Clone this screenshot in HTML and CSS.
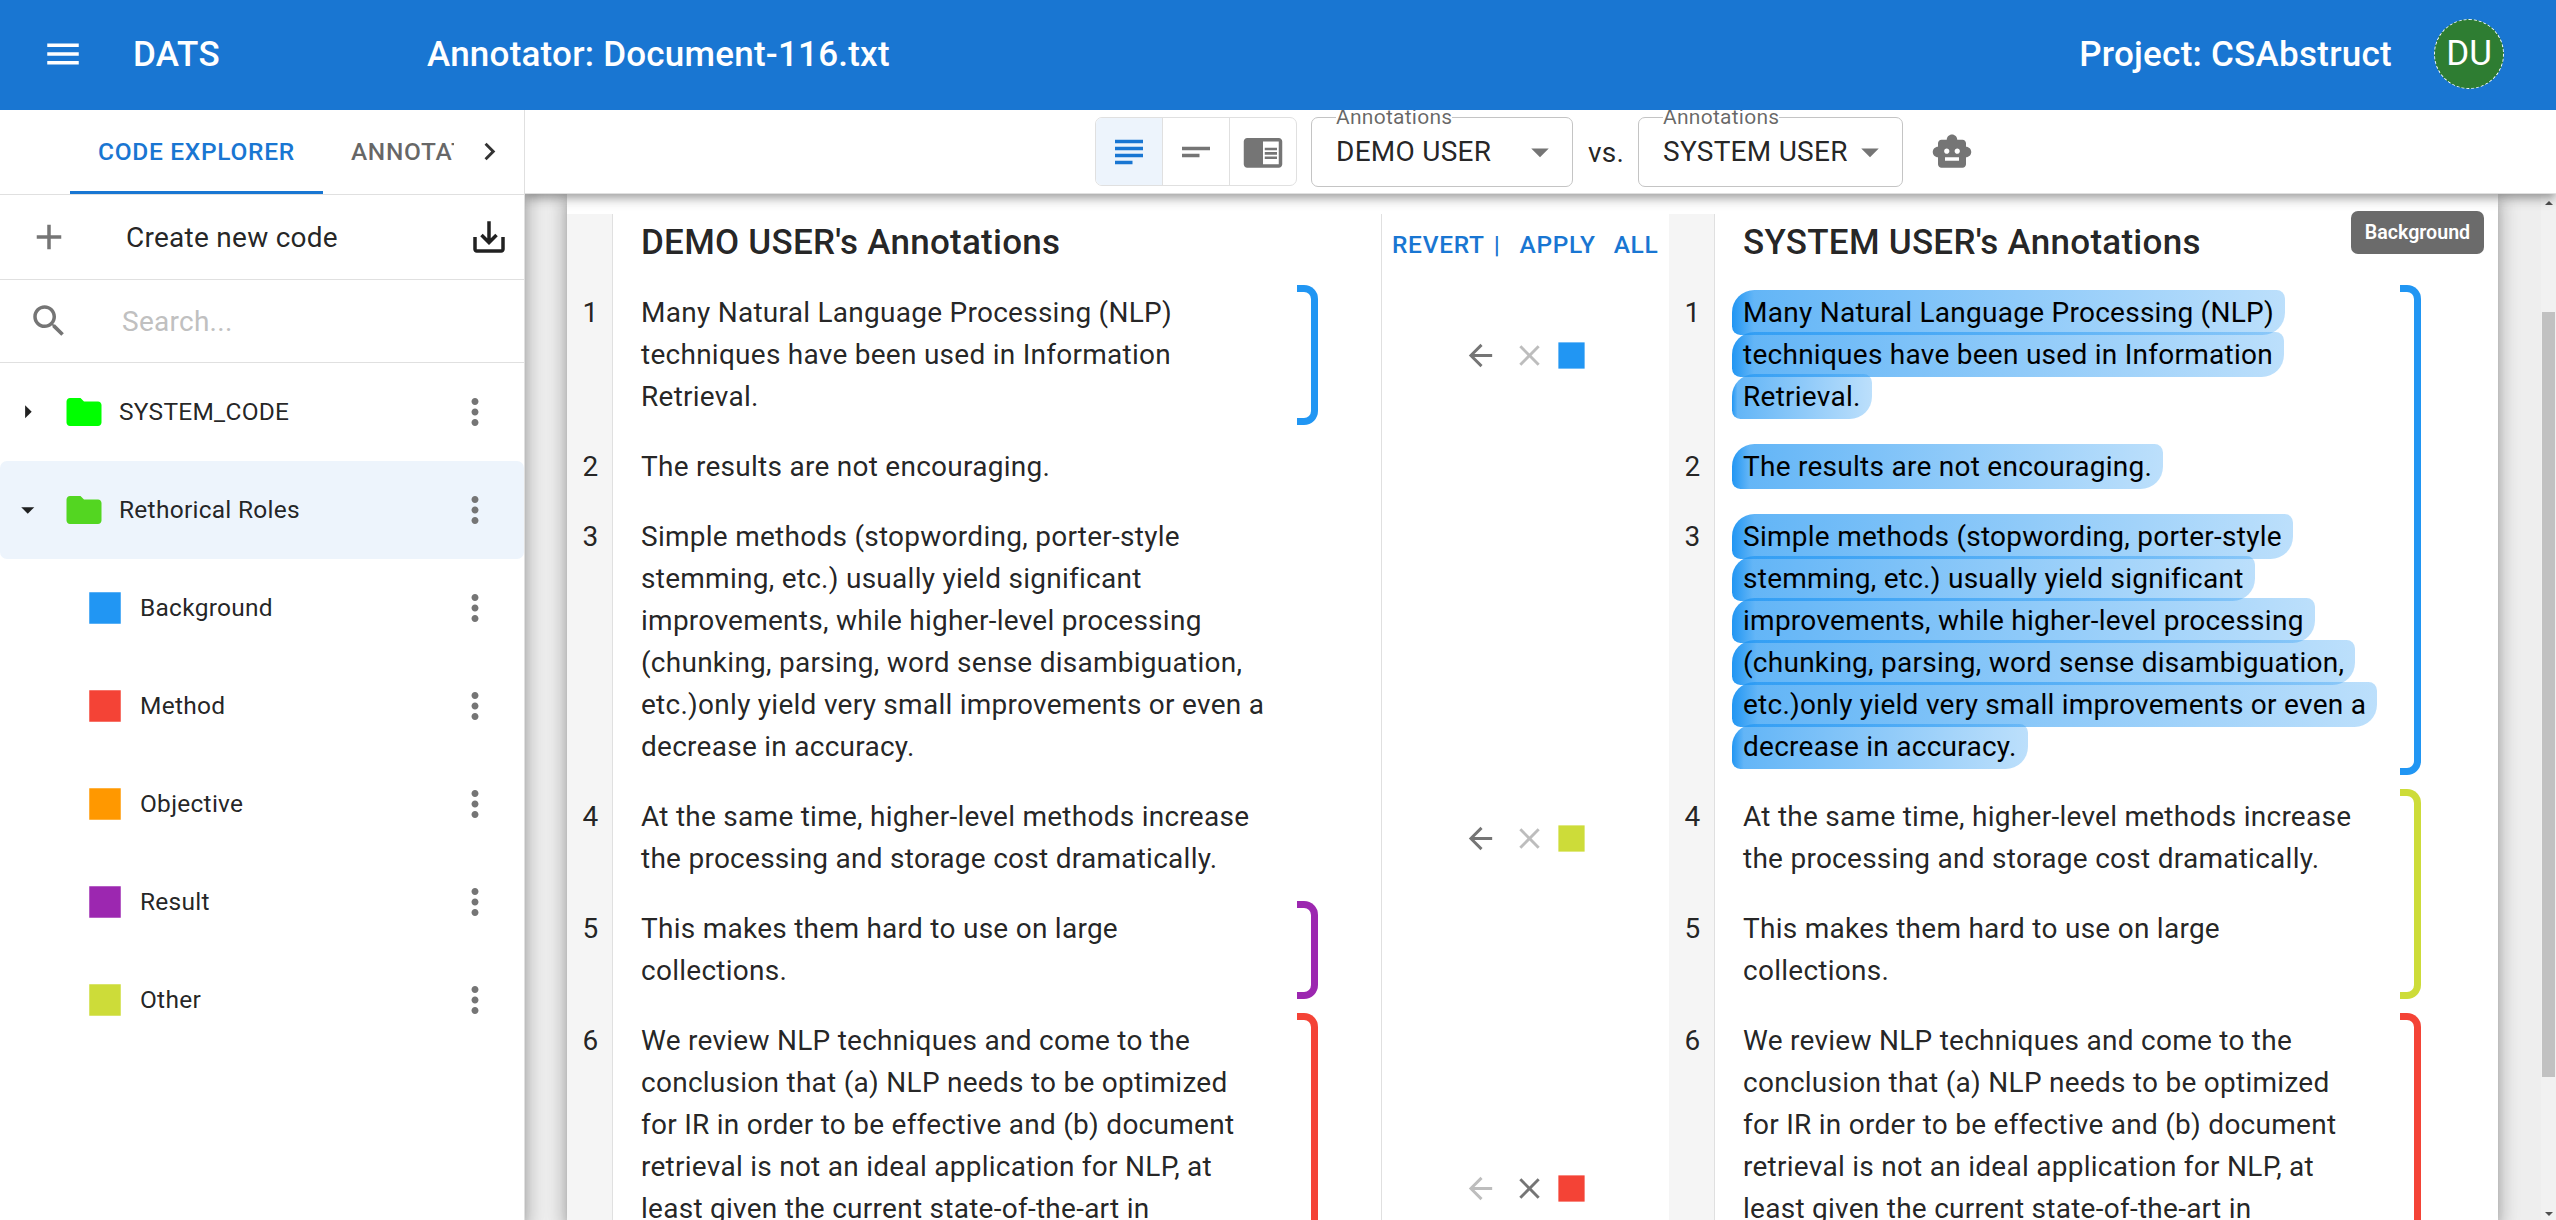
FILE: index.html
```html
<!DOCTYPE html>
<html lang="en">
<head>
<meta charset="utf-8">
<title>DATS - Annotator</title>
<link rel="stylesheet" href="styles.css">
</head>
<body>
<svg class="defs" width="0" height="0" aria-hidden="true">
  <symbol id="i-menu" viewBox="0 0 24 24"><path d="M3 18h18v-2H3zm0-5h18v-2H3zm0-7v2h18V6z"/></symbol>
  <symbol id="i-right" viewBox="0 0 24 24"><path d="M10 6 8.59 7.41 13.17 12l-4.58 4.59L10 18l6-6z"/></symbol>
  <symbol id="i-add" viewBox="0 0 24 24"><path d="M19 13h-6v6h-2v-6H5v-2h6V5h2v6h6z"/></symbol>
  <symbol id="i-download" viewBox="0 0 24 24"><path d="M19 12v7H5v-7H3v7c0 1.100.9 2 2 2h14c1.100 0 2-.9 2-2v-7zm-6 .67 2.590-2.580L17 11.500l-5 5-5-5 1.410-1.410L11 12.670V3h2z"/></symbol>
  <symbol id="i-search" viewBox="0 0 24 24"><path d="M15.500 14h-.79l-.28-.27C15.410 12.590 16 11.110 16 9.500 16 5.910 13.090 3 9.500 3S3 5.910 3 9.500 5.910 16 9.500 16c1.610 0 3.090-.59 4.230-1.570l.27.28v.79l5 4.990L20.490 19zm-6 0C7.010 14 5 11.990 5 9.500S7.010 5 9.500 5 14 7.010 14 9.500 11.990 14 9.500 14"/></symbol>
  <symbol id="i-caret-right" viewBox="0 0 24 24"><path d="m10 17 5-5-5-5z"/></symbol>
  <symbol id="i-caret-down" viewBox="0 0 24 24"><path d="m7 10 5 5 5-5z"/></symbol>
  <symbol id="i-folder" viewBox="0 0 24 24"><path d="M10 4H4c-1.100 0-1.990.9-1.990 2L2 18c0 1.100.9 2 2 2h16c1.100 0 2-.9 2-2V8c0-1.100-.9-2-2-2h-8z"/></symbol>
  <symbol id="i-square" viewBox="0 0 24 24"><path d="M3 3h18v18H3z"/></symbol>
  <symbol id="i-more" viewBox="0 0 24 24"><path d="M12 8c1.100 0 2-.9 2-2s-.9-2-2-2-2 .9-2 2 .9 2 2 2m0 2c-1.100 0-2 .9-2 2s.9 2 2 2 2-.9 2-2-.9-2-2-2m0 6c-1.100 0-2 .9-2 2s.9 2 2 2 2-.9 2-2-.9-2-2-2"/></symbol>
  <symbol id="i-subject" viewBox="0 0 24 24"><path d="M14 17H4v2h10zm6-8H4v2h16zM4 15h16v-2H4zM4 5v2h16V5z"/></symbol>
  <symbol id="i-short" viewBox="0 0 24 24"><path d="M4 9h16v2H4zm0 4h10v2H4z"/></symbol>
  <symbol id="i-reader" viewBox="0 0 24 24"><path d="M13 12h7v1.500h-7zm0-2.500h7V11h-7zm0 5h7V16h-7zM21 4H3c-1.100 0-2 .9-2 2v13c0 1.100.9 2 2 2h18c1.100 0 2-.9 2-2V6c0-1.100-.9-2-2-2m0 15h-9V6h9z"/></symbol>
  <symbol id="i-robot" viewBox="0 0 24 24"><path d="M20 9V7c0-1.100-.9-2-2-2h-3c0-1.660-1.340-3-3-3S9 3.340 9 5H6c-1.100 0-2 .9-2 2v2c-1.660 0-3 1.340-3 3s1.340 3 3 3v4c0 1.100.9 2 2 2h12c1.100 0 2-.9 2-2v-4c1.660 0 3-1.340 3-3s-1.340-3-3-3M7.500 11.500c0-.83.67-1.500 1.500-1.500s1.500.67 1.500 1.500S9.830 13 9 13s-1.500-.67-1.500-1.500M16 17H8v-2h8zm-1-4c-.83 0-1.500-.67-1.500-1.500S14.170 10 15 10s1.500.67 1.500 1.500S15.830 13 15 13"/></symbol>
  <symbol id="i-back" viewBox="0 0 24 24"><path d="M20 11H7.830l5.590-5.590L12 4l-8 8 8 8 1.410-1.410L7.830 13H20z"/></symbol>
  <symbol id="i-close" viewBox="0 0 24 24"><path d="M19 6.410 17.590 5 12 10.590 6.410 5 5 6.410 10.590 12 5 17.590 6.410 19 12 13.410 17.590 19 19 17.590 13.410 12z"/></symbol>
</svg>

<header class="appbar">
  <svg class="icon"><use href="#i-menu"/></svg>
  <div class="brand">DATS</div>
  <div class="page-title">Annotator: Document-116.txt</div>
  <div class="project">Project: CSAbstruct</div>
  <div class="avatar">DU</div>
</header>

<div class="workspace">
  <aside class="sidebar">
    <nav class="tabs">
      <div class="tab-strip">
        <div class="tab active">CODE EXPLORER</div>
        <div class="tab">ANNOTATIONS</div>
      </div>
      <svg class="icon small tab-scroll"><use href="#i-right"/></svg>
    </nav>
    <div class="create-row">
      <svg class="icon muted"><use href="#i-add"/></svg>
      <span class="create-label">Create new code</span>
      <svg class="icon"><use href="#i-download"/></svg>
    </div>
    <div class="search-row">
      <svg class="icon muted"><use href="#i-search"/></svg>
      <span class="search-label">Search...</span>
    </div>
    <ul class="tree">
      <li class="node"><svg class="icon caret"><use href="#i-caret-right"/></svg><svg class="icon system"><use href="#i-folder"/></svg><span class="node-label">SYSTEM_CODE</span><svg class="icon muted"><use href="#i-more"/></svg></li>
      <li class="node selected"><svg class="icon caret"><use href="#i-caret-down"/></svg><svg class="icon roles"><use href="#i-folder"/></svg><span class="node-label">Rethorical Roles</span><svg class="icon muted"><use href="#i-more"/></svg></li>
      <li class="node child"><svg class="icon background"><use href="#i-square"/></svg><span class="node-label">Background</span><svg class="icon muted"><use href="#i-more"/></svg></li>
      <li class="node child"><svg class="icon method"><use href="#i-square"/></svg><span class="node-label">Method</span><svg class="icon muted"><use href="#i-more"/></svg></li>
      <li class="node child"><svg class="icon objective"><use href="#i-square"/></svg><span class="node-label">Objective</span><svg class="icon muted"><use href="#i-more"/></svg></li>
      <li class="node child"><svg class="icon result"><use href="#i-square"/></svg><span class="node-label">Result</span><svg class="icon muted"><use href="#i-more"/></svg></li>
      <li class="node child"><svg class="icon other"><use href="#i-square"/></svg><span class="node-label">Other</span><svg class="icon muted"><use href="#i-more"/></svg></li>
    </ul>
  </aside>

  <main class="content">
    <div class="toolbar">
      <div class="toggles">
        <div class="toggle on"><svg class="icon"><use href="#i-subject"/></svg></div>
        <div class="toggle"><svg class="icon"><use href="#i-short"/></svg></div>
        <div class="toggle"><svg class="icon"><use href="#i-reader"/></svg></div>
      </div>
      <div class="select first"><span class="select-label">Annotations</span><span class="select-value">DEMO USER</span><svg class="icon muted"><use href="#i-caret-down"/></svg></div>
      <span class="versus">vs.</span>
      <div class="select second"><span class="select-label">Annotations</span><span class="select-value">SYSTEM USER</span><svg class="icon muted"><use href="#i-caret-down"/></svg></div>
      <svg class="icon muted robot"><use href="#i-robot"/></svg>
    </div>

    <div class="scroller">
      <div class="paper">
        <section class="column">
          <div class="heading"><div class="gutter"></div><h2>DEMO USER's Annotations</h2></div>
          <div class="group">
            <div class="sentences">
              <div class="sentence"><div class="gutter">1</div><p>Many Natural Language Processing (NLP)<br>techniques have been used in Information<br>Retrieval.</p></div>
            </div>
            <div class="bracket background"></div>
          </div>
          <div class="group">
            <div class="sentences">
              <div class="sentence"><div class="gutter">2</div><p>The results are not encouraging.</p></div>
              <div class="sentence"><div class="gutter">3</div><p>Simple methods (stopwording, porter-style<br>stemming, etc.) usually yield significant<br>improvements, while higher-level processing<br>(chunking, parsing, word sense disambiguation,<br>etc.)only yield very small improvements or even a<br>decrease in accuracy.</p></div>
              <div class="sentence"><div class="gutter">4</div><p>At the same time, higher-level methods increase<br>the processing and storage cost dramatically.</p></div>
            </div>
          </div>
          <div class="group">
            <div class="sentences">
              <div class="sentence"><div class="gutter">5</div><p>This makes them hard to use on large<br>collections.</p></div>
            </div>
            <div class="bracket result"></div>
          </div>
          <div class="group last">
            <div class="sentences">
              <div class="sentence"><div class="gutter">6</div><p>We review NLP techniques and come to the<br>conclusion that (a) NLP needs to be optimized<br>for IR in order to be effective and (b) document<br>retrieval is not an ideal application for NLP, at<br>least given the current state-of-the-art in</p></div>
            </div>
            <div class="bracket method"></div>
          </div>
        </section>

        <section class="compare">
          <div class="actions"><span>REVERT</span><span class="bar">|</span><span class="apply">APPLY</span><span>ALL</span></div>
          <div class="decision span-first"><svg class="icon small muted"><use href="#i-back"/></svg><svg class="icon small disabled"><use href="#i-close"/></svg><svg class="icon small background"><use href="#i-square"/></svg></div>
          <div class="decision span-fourth"><svg class="icon small muted"><use href="#i-back"/></svg><svg class="icon small disabled"><use href="#i-close"/></svg><svg class="icon small other"><use href="#i-square"/></svg></div>
          <div class="decision span-sixth"><svg class="icon small disabled"><use href="#i-back"/></svg><svg class="icon small muted"><use href="#i-close"/></svg><svg class="icon small method"><use href="#i-square"/></svg></div>
        </section>

        <section class="column">
          <div class="heading"><div class="gutter"></div><h2>SYSTEM USER's Annotations</h2></div>
          <div class="group">
            <div class="sentences">
              <div class="sentence"><div class="gutter">1</div><p><mark>Many Natural Language Processing (NLP)<br>techniques have been used in Information<br>Retrieval.</mark></p></div>
              <div class="sentence"><div class="gutter">2</div><p><mark>The results are not encouraging.</mark></p></div>
              <div class="sentence"><div class="gutter">3</div><p><mark>Simple methods (stopwording, porter-style<br>stemming, etc.) usually yield significant<br>improvements, while higher-level processing<br>(chunking, parsing, word sense disambiguation,<br>etc.)only yield very small improvements or even a<br>decrease in accuracy.</mark></p></div>
            </div>
            <div class="bracket background"></div>
          </div>
          <div class="group">
            <div class="sentences">
              <div class="sentence"><div class="gutter">4</div><p>At the same time, higher-level methods increase<br>the processing and storage cost dramatically.</p></div>
              <div class="sentence"><div class="gutter">5</div><p>This makes them hard to use on large<br>collections.</p></div>
            </div>
            <div class="bracket other"></div>
          </div>
          <div class="group last">
            <div class="sentences">
              <div class="sentence"><div class="gutter">6</div><p>We review NLP techniques and come to the<br>conclusion that (a) NLP needs to be optimized<br>for IR in order to be effective and (b) document<br>retrieval is not an ideal application for NLP, at<br>least given the current state-of-the-art in</p></div>
            </div>
            <div class="bracket method"></div>
          </div>
        </section>
        <div class="tooltip">Background</div>
      </div>
      <div class="scrollbar"><i class="arrow up"></i><i class="thumb"></i><i class="arrow down"></i></div>
    </div>
  </main>
</div>
</body>
</html>
```
FILE: styles.css
```css
* { box-sizing: border-box; }

body {
  margin: 0;
  height: 1220px;
  overflow: hidden;
  display: flex;
  flex-direction: column;
  font-family: Roboto, "Liberation Sans", sans-serif;
  font-size: 28px;
  line-height: 42px;
  letter-spacing: 0.00938em;
  color: rgba(0, 0, 0, 0.87);
  background: #fff;
}

.defs { display: none; }
.icon { width: 42px; height: 42px; flex: none; fill: currentColor; }
.icon.small { width: 35px; height: 35px; }
.muted { color: #757575; }
.disabled { color: #bdbdbd; }
.system { color: #00ff00; }
.roles { color: #53d621; }
.background { color: #2196f3; }
.method { color: #f44336; }
.objective { color: #ff9800; }
.result { color: #9c27b0; }
.other { color: #cddc39; }

/* App bar */
.appbar {
  height: 110px;
  flex: none;
  display: flex;
  align-items: center;
  padding: 0 52px 2px 42px;
  background: #1976d2;
  color: #fff;
  font-size: 35px;
  font-weight: 500;
  letter-spacing: 0.0075em;
  position: relative;
  z-index: 3;
}
.brand { margin-left: 49px; width: 294px; padding-top: 2px; }
.page-title { padding-top: 2px; letter-spacing: 0.0065em; }
.project { margin-left: auto; padding-top: 2px; }
.avatar {
  width: 70px;
  height: 70px;
  margin-left: 42px;
  border: 1px dashed #fff;
  border-radius: 50%;
  background: #2e7d32;
  display: flex;
  align-items: center;
  justify-content: center;
  font-weight: 400;
  letter-spacing: 0;
}

.workspace { flex: 1; min-height: 0; display: flex; }

/* Sidebar */
.sidebar {
  width: 525px;
  flex: none;
  border-right: 1px solid #e0e0e0;
  background: #fff;
  box-shadow: 0 5px 9px -2px rgba(0, 0, 0, 0.2), 0 9px 17px 2px rgba(0, 0, 0, 0.14), 0 3px 20px 4px rgba(0, 0, 0, 0.12);
  position: relative;
  z-index: 1;
}
.tabs { height: 85px; display: flex; border-bottom: 1px solid #e0e0e0; }
.tab-strip { width: 384px; margin-left: 70px; flex: none; display: flex; overflow: hidden; }
.tab {
  height: 84px;
  padding: 0 28px;
  flex: none;
  line-height: 84px;
  font-size: 24.5px;
  font-weight: 500;
  letter-spacing: 0.02857em;
  color: rgba(0, 0, 0, 0.6);
}
.tab.active { color: #1976d2; border-bottom: 3.5px solid #1976d2; }
.tab-scroll { margin: 24px 0 0 18px; color: rgba(0, 0, 0, 0.8); }
.create-row { height: 85px; display: flex; align-items: center; padding: 0 14px 0 28px; border-bottom: 1px solid #e0e0e0; }
.create-label { margin-left: 56px; flex: 1; padding-top: 1px; }
.search-row { height: 83px; display: flex; align-items: center; padding-left: 28px; border-bottom: 1px solid #e0e0e0; }
.search-label { margin-left: 52px; padding-top: 1px; color: #c0c0c0; }
.tree { list-style: none; margin: 0; padding: 0; }
.node { height: 98px; display: flex; align-items: center; padding: 0 28px 0 12px; border-radius: 7px; }
.node.selected { background: #edf4fc; }
.node .caret { width: 31.5px; height: 31.5px; margin-right: 19.5px; }
.node.child { padding-left: 84px; }
.node-label { flex: 1; margin-left: 14px; font-size: 24.5px; letter-spacing: 0.01071em; }

/* Toolbar */
.content { flex: 1; min-width: 0; display: flex; flex-direction: column; }
.toolbar {
  height: 84px;
  flex: none;
  display: flex;
  align-items: flex-start;
  padding: 7px 0 0 570px;
  background: #fff;
  border-bottom: 1px solid #e0e0e0;
  box-shadow: 0 3.5px 7px -1.75px rgba(0, 0, 0, 0.2), 0 7px 8.75px rgba(0, 0, 0, 0.14), 0 1.75px 17.5px rgba(0, 0, 0, 0.12);
  clip-path: inset(0 0 -40px 0);
  position: relative;
  z-index: 2;
}
.toggles { display: flex; height: 69px; width: 202px; border: 1px solid #e0e0e0; border-radius: 7px; overflow: hidden; color: #757575; }
.toggle { flex: 1; display: flex; align-items: center; justify-content: center; }
.toggle + .toggle { border-left: 1px solid #e0e0e0; }
.toggle.on { background: #edf4fc; color: #1976d2; }
.select { height: 70px; border: 1px solid #c4c4c4; border-radius: 7px; display: flex; align-items: center; padding-left: 24px; position: relative; }
.select.first { width: 262px; margin-left: 14px; }
.select.second { width: 265px; }
.select-value { flex: 1; white-space: nowrap; }
.select .icon { margin-right: 11px; flex: none; }
.select-label { position: absolute; left: 24px; top: -20px; font-size: 21px; line-height: 38px; color: rgba(0, 0, 0, 0.6); background: #fff; }
.versus { width: 65px; padding: 15px 0 0 15px; }
.robot { margin: 14px 0 0 28px; }

/* Document area */
.scroller { flex: 1; min-height: 0; display: flex; overflow: hidden; background: #eee; justify-content: space-between; }
.paper {
  width: 1931px;
  margin-left: 42px;
  padding: 20px 14px 0 0;
  display: grid;
  grid-template-columns: 814px 288px 815px;
  background: #fff;
  box-shadow: 0 5px 9px -2px rgba(0, 0, 0, 0.2), 0 9px 17px 2px rgba(0, 0, 0, 0.14), 0 3px 20px 4px rgba(0, 0, 0, 0.12);
  position: relative;
}
.gutter { width: 46px; flex: none; background: #f5f5f5; border-right: 1px solid #e0e0e0; text-align: center; padding: 14px 0 0 2px; }
.heading { height: 64px; display: flex; }
h2 { margin: 0; padding: 1px 0 0 28px; font-size: 35px; line-height: 56px; font-weight: 500; letter-spacing: 0.0075em; }
.group { display: flex; justify-content: space-between; }
.group.last .sentence { height: 364px; }
.sentence { display: flex; }
p { margin: 0; padding: 14px 0 14px 28px; white-space: nowrap; }
mark {
  margin: 0 -0.4em;
  padding: 0.2em 0.4em;
  border-radius: 0.8em 0.3em;
  color: #000;
  background: linear-gradient(to right, rgb(33, 150, 243), rgba(33, 150, 243, 0.7) 4%, rgba(33, 150, 243, 0.3));
  -webkit-box-decoration-break: clone;
  box-decoration-break: clone;
}
.bracket { width: 21px; margin: 7px 63px 7px 0; border: 7px solid currentColor; border-left: 0; border-radius: 0 14px 14px 0; }

.compare { border-left: 1px solid #e0e0e0; }
.actions { height: 64px; display: flex; padding: 10px 0 0 10px; font-size: 24.5px; font-weight: 500; letter-spacing: 0.02857em; color: #1976d2; }
.actions .bar { margin-left: 9px; }
.actions .apply { margin: 0 18px 0 19px; }
.decision { display: flex; align-items: center; padding-left: 81px; gap: 14px; }
.decision .icon:last-child { margin-left: -7px; }
.span-first { height: 154px; }
.span-fourth { height: 112px; margin-top: 350px; }
.span-sixth { height: 364px; margin-top: 112px; }

.tooltip {
  position: absolute;
  top: 17px;
  right: 14px;
  width: 133px;
  padding: 7px 0;
  border-radius: 7px;
  background: #6b6b6b;
  color: #fff;
  font-size: 19.6px;
  line-height: 29px;
  font-weight: 600;
  letter-spacing: 0;
  text-align: center;
}

.scrollbar { width: 15px; flex: none; background: #f1f1f1; display: flex; flex-direction: column; align-items: center; position: relative; padding: 7px 0 4px; }
.arrow { border: 4px solid transparent; width: 0; height: 0; }
.arrow.up { border-top: 0; border-bottom-color: #505050; }
.arrow.down { border-bottom: 0; border-top-color: #505050; margin-top: auto; }
.thumb { width: 13px; height: 765px; margin-top: 107px; background: #c1c1c1; }
```
